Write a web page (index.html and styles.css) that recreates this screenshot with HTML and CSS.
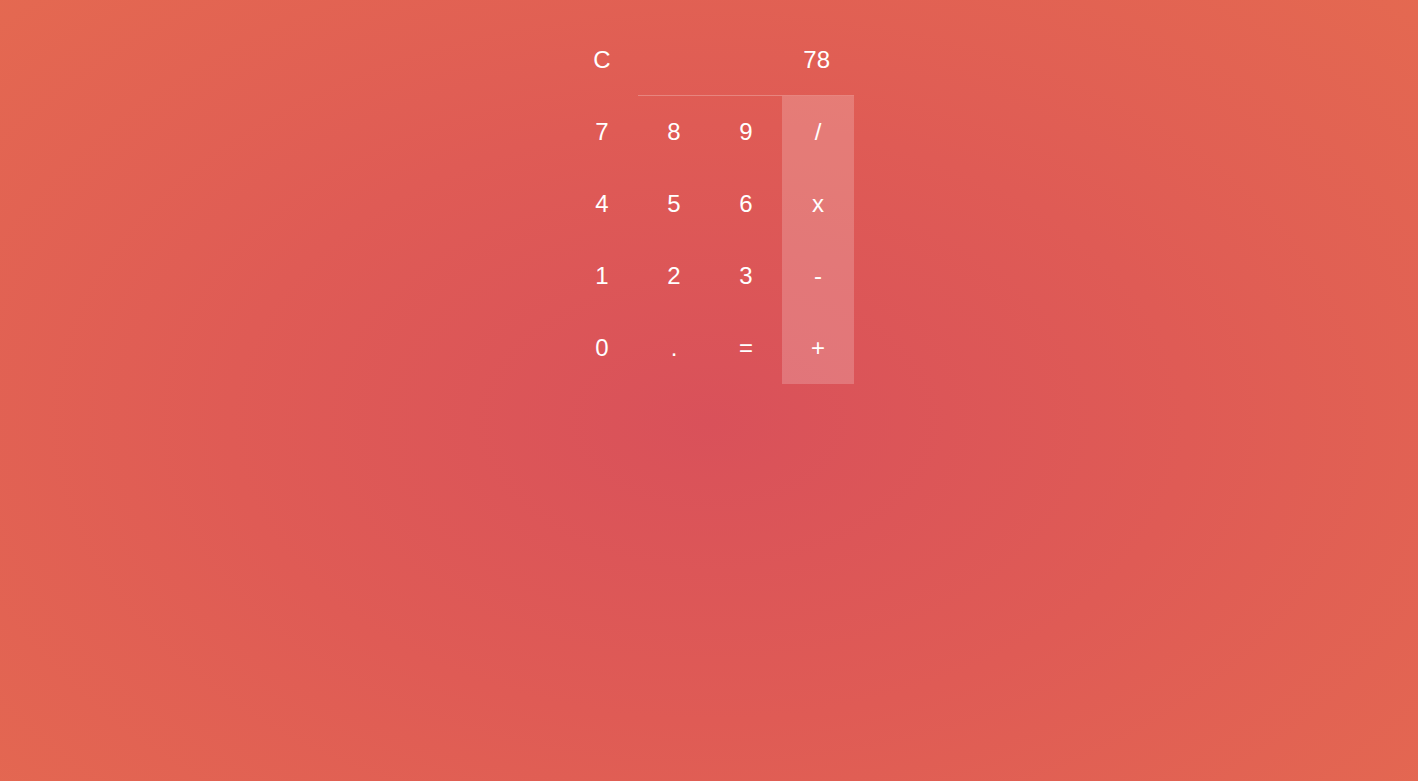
FILE: index.html
```html
<!DOCTYPE html>
<html>
<head>
<meta charset="utf-8">
<link rel="stylesheet" href="styles.css">
</head>
<body>
<div class="calc">
  <div class="key">C</div>
  <div class="display">78</div>
  <div class="key">7</div><div class="key">8</div><div class="key">9</div><div class="key op">/</div>
  <div class="key">4</div><div class="key">5</div><div class="key">6</div><div class="key op">x</div>
  <div class="key">1</div><div class="key">2</div><div class="key">3</div><div class="key op">-</div>
  <div class="key">0</div><div class="key">.</div><div class="key">=</div><div class="key op">+</div>
</div>
</body>
</html>
```
FILE: styles.css
```css
html, body {
  margin: 0;
  height: 100%;
}
body {
  padding-left: 2px;
  box-sizing: border-box;
  background: radial-gradient(ellipse 75% 85% at 50% 54%, #d9515a 0%, #df5b55 45%, #e56b50 100%);
  font-family: "Liberation Sans", Arial, sans-serif;
  color: #fff;
}
.calc {
  width: 288px;
  margin: 0 auto;
  padding-top: 24px;
  display: grid;
  grid-template-columns: repeat(4, 72px);
  grid-auto-rows: 72px;
}
.key {
  display: flex;
  align-items: center;
  justify-content: center;
  font-size: 24px;
}
.display {
  grid-column: span 3;
  display: flex;
  align-items: center;
  justify-content: flex-end;
  padding-right: 24px;
  font-size: 24px;
  border-bottom: 1px solid rgba(255, 255, 255, 0.25);
}
.op {
  background: rgba(255, 255, 255, 0.2);
}
```
